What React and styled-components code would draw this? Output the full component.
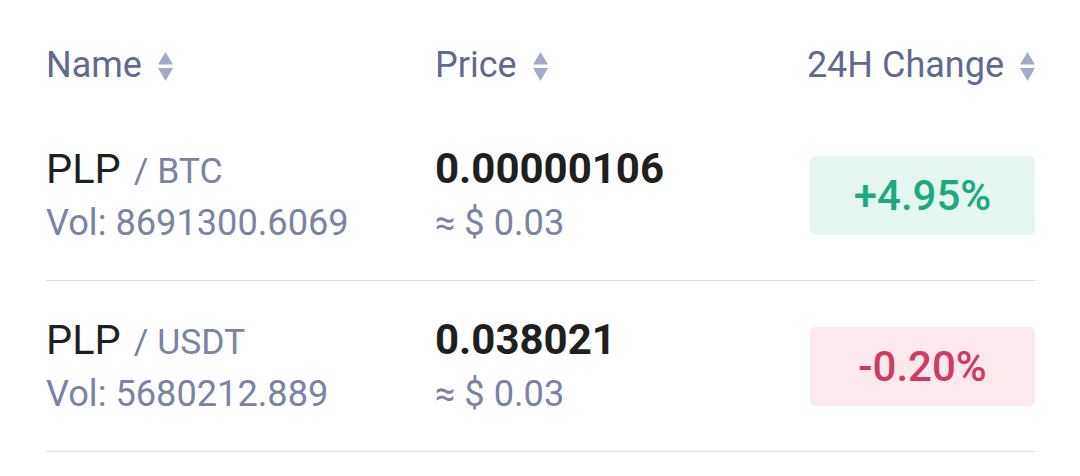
import React from "react";
import styled, { createGlobalStyle } from "styled-components";

const Global = createGlobalStyle`
  html, body { margin: 0; padding: 0; background: #ffffff; }
  body { font-family: Roboto, "Noto Sans", sans-serif; }
`;

const Table = styled.div`
  width: 1080px;
  height: 476px;
  box-sizing: border-box;
  padding: 0 45px 0 46px;
  background: #fff;
`;

const HeaderRow = styled.div`
  display: grid;
  grid-template-columns: 389px 1fr auto;
  align-items: center;
  box-sizing: border-box;
  height: 110px;
  padding: 40px 0 20px;
`;

const HeadCell = styled.div`
  display: flex;
  align-items: center;
  gap: 16px;
  font-size: 36px;
  line-height: 50px;
  color: #5f6a8e;
  justify-self: ${(p) => (p.$right ? "end" : "start")};
`;

const SortIcon = styled.svg`
  width: 15px;
  height: 29px;
  flex: none;
  margin-top: 2px;
`;

const Row = styled.div`
  display: grid;
  grid-template-columns: 389px 1fr auto;
  align-items: center;
  height: 171px;
  box-sizing: border-box;
  border-bottom: 1px solid #dddddd;
  padding-top: 1px;
`;

const Stack = styled.div`
  display: flex;
  flex-direction: column;
  gap: 2px;
`;

const Line = styled.div`
  display: flex;
  align-items: baseline;
  height: 52px;
  line-height: 52px;
  white-space: nowrap;
`;

const Base = styled.span`
  font-size: 41.5px;
  color: #1f1f1f;
`;

const Quote = styled.span`
  font-size: 35.5px;
  color: #7a83a3;
  margin-left: 13px;
`;

const Sub = styled.span`
  font-size: 36.2px;
  color: #7a83a3;
`;

const Price = styled.span`
  font-size: 42px;
  font-weight: 700;
  color: #1f1f1f;
`;

const Badge = styled.div`
  justify-self: end;
  width: 225px;
  height: 79px;
  border-radius: 6px;
  display: flex;
  align-items: center;
  justify-content: center;
  font-size: 42px;
  font-weight: 500;
  background: ${(p) => (p.$up ? "#e5f6f0" : "#fbe9ed")};
  color: ${(p) => (p.$up ? "#1ca97f" : "#d03a60")};
`;

const Sort = () => (
  <SortIcon viewBox="0 0 15 29">
    <path d="M7.5 0 L15 12.5 L0 12.5 Z" fill="#a3aac4" />
    <path d="M0 16 L15 16 L7.5 29 Z" fill="#a3aac4" />
  </SortIcon>
);

const rows = [
  { base: "PLP", quote: "BTC", vol: "8691300.6069", price: "0.00000106", usd: "0.03", change: "+4.95%", up: true },
  { base: "PLP", quote: "USDT", vol: "5680212.889", price: "0.038021", usd: "0.03", change: "-0.20%", up: false },
];

export default function App() {
  return (
    <>
      <Global />
      <Table>
        <HeaderRow>
          <HeadCell>Name<Sort /></HeadCell>
          <HeadCell>Price<Sort /></HeadCell>
          <HeadCell $right>24H Change<Sort /></HeadCell>
        </HeaderRow>
        {rows.map((r, i) => (
          <Row key={i}>
            <Stack>
              <Line><Base>{r.base}</Base><Quote>/ {r.quote}</Quote></Line>
              <Line><Sub>Vol: {r.vol}</Sub></Line>
            </Stack>
            <Stack>
              <Line><Price>{r.price}</Price></Line>
              <Line><Sub>≈ $ {r.usd}</Sub></Line>
            </Stack>
            <Badge $up={r.up}>{r.change}</Badge>
          </Row>
        ))}
      </Table>
    </>
  );
}
